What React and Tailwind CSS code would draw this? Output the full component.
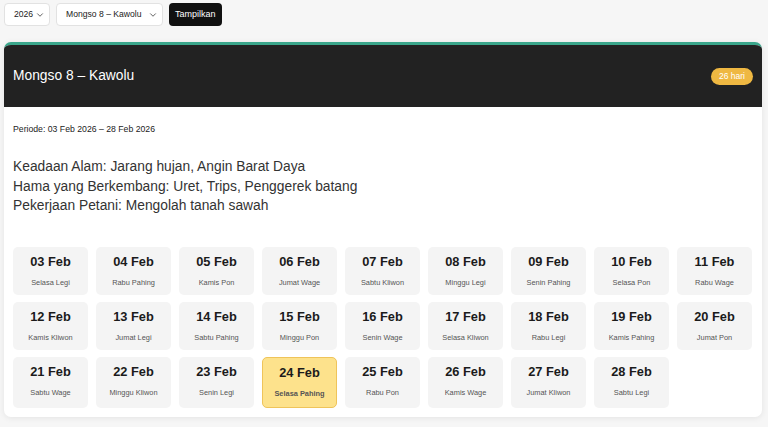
import { ChevronDown } from 'lucide-react'

const days = [
  ['03 Feb', 'Selasa Legi'],
  ['04 Feb', 'Rabu Pahing'],
  ['05 Feb', 'Kamis Pon'],
  ['06 Feb', 'Jumat Wage'],
  ['07 Feb', 'Sabtu Kliwon'],
  ['08 Feb', 'Minggu Legi'],
  ['09 Feb', 'Senin Pahing'],
  ['10 Feb', 'Selasa Pon'],
  ['11 Feb', 'Rabu Wage'],
  ['12 Feb', 'Kamis Kliwon'],
  ['13 Feb', 'Jumat Legi'],
  ['14 Feb', 'Sabtu Pahing'],
  ['15 Feb', 'Minggu Pon'],
  ['16 Feb', 'Senin Wage'],
  ['17 Feb', 'Selasa Kliwon'],
  ['18 Feb', 'Rabu Legi'],
  ['19 Feb', 'Kamis Pahing'],
  ['20 Feb', 'Jumat Pon'],
  ['21 Feb', 'Sabtu Wage'],
  ['22 Feb', 'Minggu Kliwon'],
  ['23 Feb', 'Senin Legi'],
  ['24 Feb', 'Selasa Pahing'],
  ['25 Feb', 'Rabu Pon'],
  ['26 Feb', 'Kamis Wage'],
  ['27 Feb', 'Jumat Kliwon'],
  ['28 Feb', 'Sabtu Legi'],
]

// today is highlighted
const TODAY = '24 Feb'

function FakeSelect({ label, width }) {
  return (
    <div
      className={`flex h-[23px] items-center justify-between whitespace-nowrap rounded-[4px] border border-[#e2e2e2] bg-white pl-[9px] pr-[4px] text-[8.6px] text-[#222] ${width}`}
    >
      <span>{label}</span>
      <ChevronDown className="h-[10px] w-[10px] text-[#444]" strokeWidth={2} />
    </div>
  )
}

function DayCard({ date, name }) {
  const active = date === TODAY
  return (
    <div
      className={
        active
          ? 'flex min-h-[51px] flex-col items-center rounded-[5px] border border-[#efc45a] bg-[#fde28c] pt-[6px]'
          : 'flex min-h-[48px] flex-col items-center rounded-[5px] bg-[#f4f4f4] pt-[6px]'
      }
    >
      <p className="text-[12.8px] font-bold leading-[18px] text-[#1b1b1b]">{date}</p>
      <p
        className={
          active
            ? 'mt-[7px] text-[7.4px] font-semibold leading-[10px] text-[#555]'
            : 'mt-[7px] text-[7.4px] leading-[10px] text-[#555]'
        }
      >
        {name}
      </p>
    </div>
  )
}

export default function App() {
  return (
    <div className="min-h-screen bg-[#f6f6f6] font-[family-name:'Liberation_Sans',Arial,sans-serif]">
      <div className="flex items-center gap-[6px] pl-[4px] pt-[3px]">
        <FakeSelect label="2026" width="w-[46px]" />
        <FakeSelect label="Mongso 8 – Kawolu" width="w-[107px]" />
        <button className="h-[23px] rounded-[4px] bg-[#111] px-[6px] text-[9px] text-white">
          Tampilkan
        </button>
      </div>

      <div className="ml-[4px] mt-[16px] w-[758px] overflow-hidden rounded-[7px] border-t-[3px] border-[#3aa68b] bg-white shadow-[0_1px_6px_rgba(0,0,0,0.08)]">
        <div className="flex h-[62px] items-center justify-between bg-[#222222] px-[9px]">
          <h2 className="pt-[1px] text-[13.8px] text-white">Mongso 8 – Kawolu</h2>
          <span className="flex h-[17px] items-center rounded-full bg-[#efb842] px-[8px] text-[8.5px] text-white">
            26 hari
          </span>
        </div>

        <div className="px-[9px] pb-[9px] pt-[16px]">
          <p className="text-[8.7px] leading-[12px] text-[#222]">Periode: 03 Feb 2026 – 28 Feb 2026</p>

          <div className="mt-[22px] text-[13.8px] leading-[19.5px] text-[#333]">
            <p>Keadaan Alam: Jarang hujan, Angin Barat Daya</p>
            <p>Hama yang Berkembang: Uret, Trips, Penggerek batang</p>
            <p>Pekerjaan Petani: Mengolah tanah sawah</p>
          </div>

          <div className="mt-[31px] grid grid-cols-[repeat(9,75px)] gap-x-[8px] gap-y-[7px]">
            {days.map(([date, name]) => (
              <DayCard key={date} date={date} name={name} />
            ))}
          </div>
        </div>
      </div>
    </div>
  )
}
